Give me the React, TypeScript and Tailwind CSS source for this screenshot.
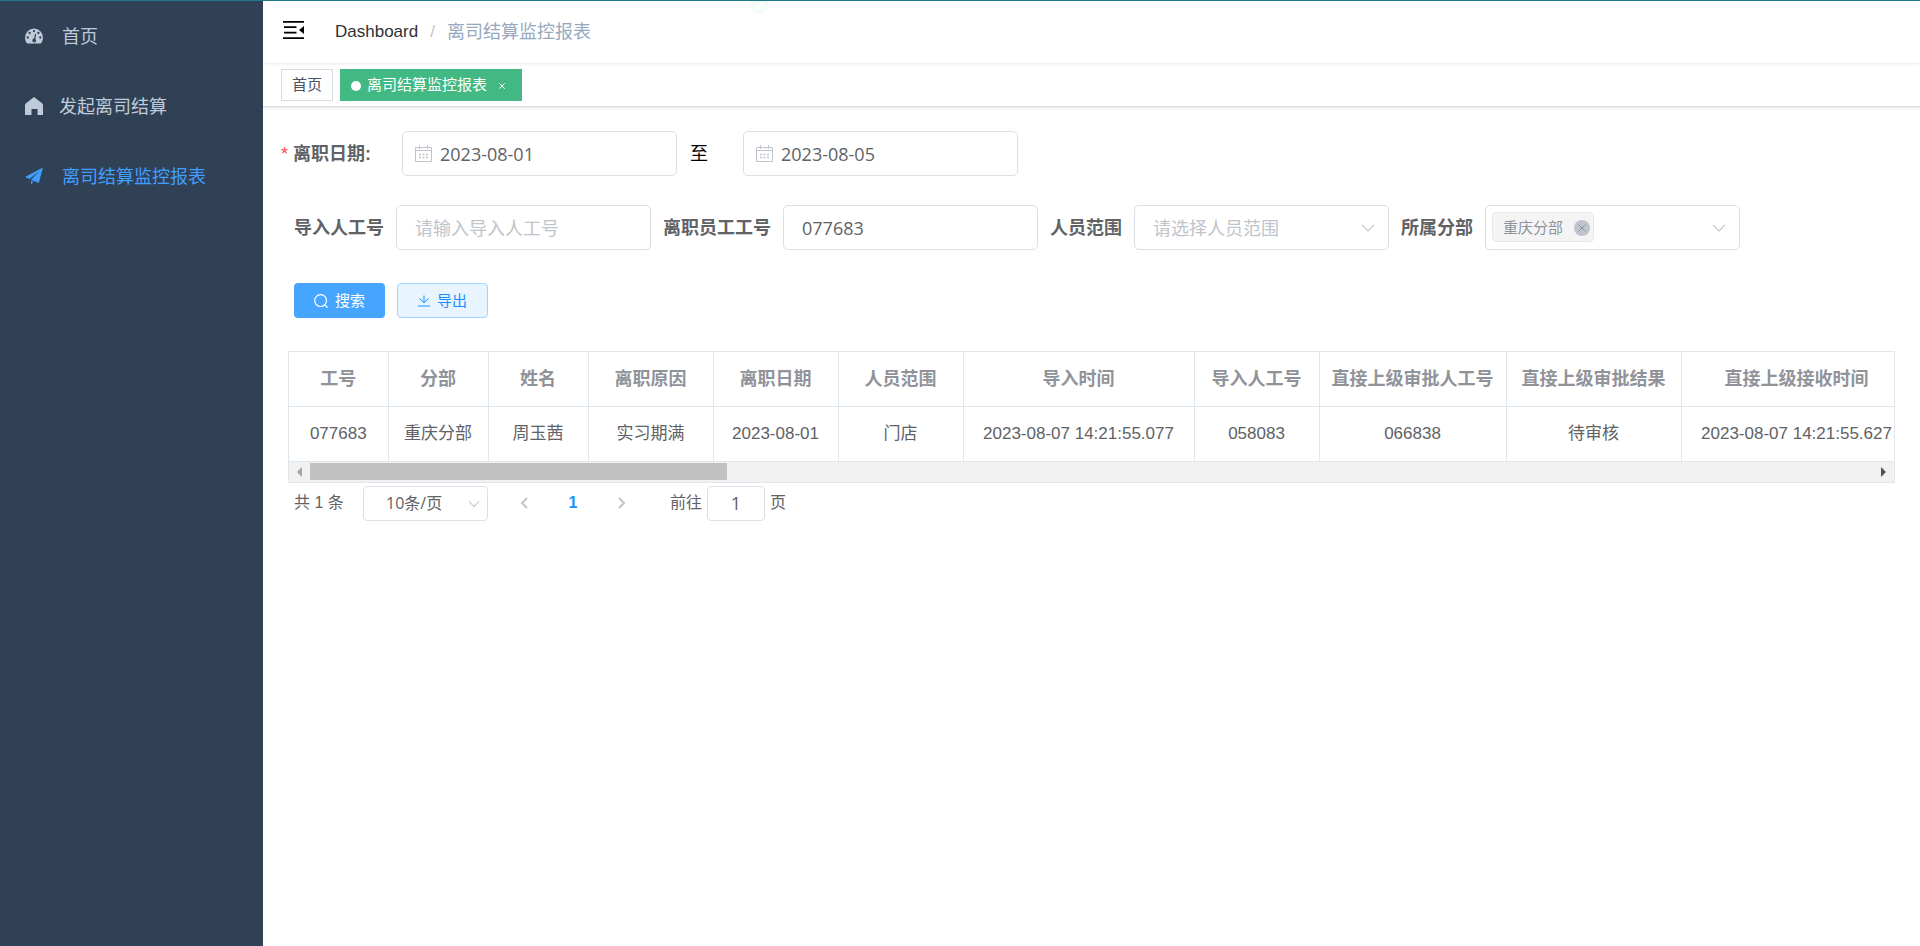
import React from 'react';

const menu = [
  { name: '首页', icon: 'dashboard', active: false },
  { name: '发起离司结算', icon: 'home', active: false },
  { name: '离司结算监控报表', icon: 'plane', active: true },
];

const columns = [
  { label: '工号', value: '077683', width: 'w-[99px]' },
  { label: '分部', value: '重庆分部', width: 'w-[100px]' },
  { label: '姓名', value: '周玉茜', width: 'w-[100px]' },
  { label: '离职原因', value: '实习期满', width: 'w-[125px]' },
  { label: '离职日期', value: '2023-08-01', width: 'w-[125px]' },
  { label: '人员范围', value: '门店', width: 'w-[125px]' },
  { label: '导入时间', value: '2023-08-07 14:21:55.077', width: 'w-[231px]' },
  { label: '导入人工号', value: '058083', width: 'w-[125px]' },
  { label: '直接上级审批人工号', value: '066838', width: 'w-[187px]' },
  { label: '直接上级审批结果', value: '待审核', width: 'w-[175px]' },
  { label: '直接上级接收时间', value: '2023-08-07 14:21:55.627', width: 'w-[231px]' },
];

const inputFont = "font-['Open_Sans','Noto_Sans_CJK_SC',sans-serif]";
const boxClass = `h-[45px] rounded-[5px] border border-[#dcdfe6] bg-white text-lg text-[#606266] placeholder:text-[#c0c4cc] outline-none ${inputFont}`;

const MenuIcon = ({ name }: { name: string }) => {
  if (name === 'dashboard') {
    return (
      <svg viewBox="0 0 18 16" className="w-[18px] h-4 flex-shrink-0" fill="currentColor">
        <path d="M9 .5a9 9 0 0 0-9 9c0 2 .5 3.800 1.500 5.200.3.500.7.800 1.300.800h12.400c.6 0 1-.3 1.300-.8A9.500 9.500 0 0 0 18 9.500a9 9 0 0 0-9-9z" />
        <g fill="#304156">
          <circle cx="2.700" cy="9.500" r="1.150" />
          <circle cx="4.600" cy="5" r="1.150" />
          <circle cx="9" cy="3.100" r="1.150" />
          <circle cx="13.400" cy="5" r="1.150" />
          <circle cx="15.300" cy="9.500" r="1.150" />
          <path d="M10.100 5.800l1 .3-.8 4.800a1.900 1.900 0 1 1-1.300-.3z" />
        </g>
      </svg>
    );
  }
  if (name === 'home') {
    return (
      <svg viewBox="0 0 18 18" className="w-[18px] h-[18px] flex-shrink-0" fill="currentColor">
        <path d="M9 0l8 6.300c.6.500 1 1.200 1 2V18h-5.500v-6h-6v6H0V8.300c0-.8.3-1.500 1-2z" />
      </svg>
    );
  }
  return (
    <svg viewBox="0 0 18 18" className="w-[18px] h-[18px] flex-shrink-0" fill="currentColor">
      <path d="M18 .5L0 10l4.400 2L14.500 4 6 12.700l7.800 3.300z" />
      <path d="M6 13.700v4.100l2.500-3z" />
    </svg>
  );
};

const CalendarIcon = () => (
  <svg viewBox="0 0 17 17" className="absolute left-[13px] top-3.5 w-[17px] h-[17px] text-[#c0c4cc] pointer-events-none" fill="none" stroke="currentColor">
    <path d="M.5 2.500h16v14H.5zM.5 5.500h16M4.500 0v4M12.500 0v4" />
    <path d="M4 9.500h9M4 12.500h9" strokeWidth="1.500" strokeDasharray="2 1.500" />
  </svg>
);

const Chevron = ({ className }: { className: string }) => (
  <svg viewBox="0 0 14 8" className={`absolute h-2 text-[#c0c4cc] pointer-events-none ${className}`} fill="none" stroke="currentColor" strokeWidth="1.200">
    <path d="M1 .8l6 6 6-6" />
  </svg>
);

const DateInput = ({ id, value }: { id: string; value: string }) => (
  <div className="relative">
    <CalendarIcon />
    <input id={id} defaultValue={value} className={`w-[275px] pl-[37px] pr-4 ${boxClass}`} />
  </div>
);

const Sidebar = () => (
  <aside className="w-[263px] flex-shrink-0 bg-[#304156]">
    <nav>
      {menu.map((item) => (
        <a
          key={item.name}
          href="#"
          className={`flex items-center h-[70px] pl-[25px] text-lg ${item.icon === 'home' ? 'gap-4' : 'gap-[19px]'} ${
            item.active ? 'text-[#409eff]' : 'text-[#bfcbd9]'
          }`}
        >
          <MenuIcon name={item.icon} />
          <span className="pt-0.5">{item.name}</span>
        </a>
      ))}
    </nav>
  </aside>
);

const Navbar = () => (
  <header className="relative flex items-center h-[62px] pl-5 shadow-[0_1px_4px_rgba(0,21,41,0.08)]">
    <button aria-label="折叠菜单" className="pb-1 text-black">
      <svg viewBox="0 0 21 18" className="block w-[21px] h-[18px]" fill="currentColor">
        <path d="M0 0h21v1.800H0zM1 5.200h12.500v1.800H1zM1 10.800h12.500v1.800H1zM0 16.200h21V18H0zM21 5v8l-5-4z" />
      </svg>
    </button>
    <nav className="flex items-center ml-[31px] leading-6">
      <a href="#" className="text-[17px] text-[#303133]">Dashboard</a>
      <span className="mx-3 text-[17px] text-[#c0c4cc]">/</span>
      <span className="text-lg leading-6 text-[#97a8be]">离司结算监控报表</span>
    </nav>
    {/* success message sliding out */}
    <svg viewBox="0 0 18 14" className="absolute left-[487px] top-0 w-[18px] h-3.5" fill="none">
      <path d="M0 0h18v4a9 9 0 0 1-18 0z" fill="#f3fcf7" />
      <path d="M5 4l3 3 5-5" stroke="#ffffff" strokeWidth="2" />
    </svg>
  </header>
);

const TagsView = () => (
  <div className="flex items-start gap-[7px] h-[43px] mt-px pl-[18px] pt-[5px] border-b border-[#d8dce5] shadow-[0_1px_3px_rgba(0,0,0,0.12)] text-[15px]">
    <a href="#" className="flex items-center h-8 px-2.5 pt-px border border-[#d8dce5] text-[#495060]">首页</a>
    <a href="#" className="flex items-center h-8 px-[11px] pt-px bg-[#42b983] text-white">
      <span className="w-2.5 h-2.5 mr-1.5 rounded-full bg-white" />
      离司结算监控报表
      <svg viewBox="0 0 6 6" className="w-1.5 h-1.5 ml-3 mr-1.5" stroke="currentColor">
        <path d="M.3.3l5.400 5.400M5.700.3L.3 5.700" />
      </svg>
    </a>
  </div>
);

const SearchForm = () => (
  <form onSubmit={(e) => e.preventDefault()}>
    <div className="flex items-center text-lg">
      <label htmlFor="startDate" className="w-[121px] font-bold text-[#606266]">
        <span className="mr-[5px] font-normal text-[#ff4949]">*</span>离职日期:
      </label>
      <DateInput id="startDate" value="2023-08-01" />
      <label htmlFor="endDate" className="w-[66px] pl-[13px] text-black">至</label>
      <DateInput id="endDate" value="2023-08-05" />
    </div>

    <div className="flex flex-wrap gap-x-3 gap-y-4 mt-[29px] pl-[13px] text-lg">
      <div className="flex items-center gap-3">
        <label htmlFor="importer" className="font-bold text-[#606266]">导入人工号</label>
        <input id="importer" placeholder="请输入导入人工号" className={`w-[255px] px-[18px] ${boxClass}`} />
      </div>
      <div className="flex items-center gap-3">
        <label htmlFor="employee" className="font-bold text-[#606266]">离职员工工号</label>
        <input id="employee" defaultValue="077683" className={`w-[255px] px-[18px] ${boxClass}`} />
      </div>
      <div className="flex items-center gap-3">
        <label htmlFor="range" className="font-bold text-[#606266]">人员范围</label>
        <div className="relative">
          <select id="range" className={`appearance-none w-[255px] px-[18px] ${boxClass} text-[#c0c4cc]!`}>
            <option>请选择人员范围</option>
          </select>
          <Chevron className="w-3.5 right-3.5 top-[19px]" />
        </div>
      </div>
      <div className="flex items-center gap-3">
        <label htmlFor="branch" className="font-bold text-[#606266]">所属分部</label>
        <div className="relative">
          <select id="branch" className={`appearance-none w-[255px] ${boxClass}`}>
            <option></option>
          </select>
          <span className="absolute left-[7px] top-[7px] flex items-center h-[30px] w-[102px] pl-2.5 pt-px rounded border border-[#e9e9eb] bg-[#f4f4f5] text-[15px] text-[#909399] whitespace-nowrap">
            重庆分部
            <button type="button" aria-label="移除" className="ml-[11px] flex items-center justify-center w-4 h-4 flex-shrink-0 rounded-full bg-[#c0c4cc]">
              <svg viewBox="0 0 8 8" className="w-2 h-2" stroke="#909399">
                <path d="M.5.5l7 7M7.500.5l-7 7" />
              </svg>
            </button>
          </span>
          <Chevron className="w-3.5 right-3.5 top-[19px]" />
        </div>
      </div>
    </div>

    <div className="flex gap-3 mt-[33px] pl-[13px] text-[15px]">
      <button className="flex items-center justify-center gap-[7px] w-[91px] h-[35px] pt-px rounded bg-[#46a6ff] text-white">
        <svg viewBox="0 0 14 14" className="w-3.5 h-3.5" fill="none" stroke="currentColor" strokeWidth="1.200">
          <circle cx="6.600" cy="6.600" r="5.900" />
          <path d="M10.800 10.800l2.700 2.700" />
        </svg>
        搜索
      </button>
      <button type="button" className="flex items-center justify-center gap-[7px] w-[91px] h-[35px] pt-px rounded border border-[#a3d3ff] bg-[#e8f4ff] text-[#1890ff]">
        <svg viewBox="0 0 12 12" className="w-3 h-3" fill="none" stroke="currentColor">
          <path d="M6 .5v7M1.500 3.500L6 7.700l4.500-4.200M0 11h12" />
        </svg>
        导出
      </button>
    </div>
  </form>
);

const ReportTable = () => (
  <div className="mt-[33px] ml-[7px] border border-[#dfe6ec] overflow-hidden">
    <div className="overflow-hidden">
      <table className="table-fixed w-[1623px] border-collapse">
        <thead>
          <tr className="h-[54px] border-b border-[#dfe6ec]">
            {columns.map((col) => (
              <th key={col.label} className={`${col.width} border-r border-[#dfe6ec] text-lg leading-6 font-bold text-[#909399] whitespace-nowrap`}>
                {col.label}
              </th>
            ))}
          </tr>
        </thead>
        <tbody>
          <tr className="h-[55px] border-b border-[#dfe6ec]">
            {columns.map((col) => (
              <td key={col.label} className="border-r border-[#dfe6ec] text-center text-[17px] leading-6 text-[#606266] whitespace-nowrap">
                {col.value}
              </td>
            ))}
          </tr>
        </tbody>
      </table>
    </div>
    <div className="flex items-center h-5 bg-[#f1f1f1]">
      <span className="flex justify-center w-[21px]">
        <svg viewBox="0 0 5 10" className="w-[5px] h-2.5" fill="#a3a3a3"><path d="M5 0v10L0 5z" /></svg>
      </span>
      <div className="flex-grow">
        <div className="w-4/15 h-[17px] bg-[#c1c1c1]" />
      </div>
      <span className="flex justify-center w-[21px]">
        <svg viewBox="0 0 5 10" className="w-[5px] h-2.5" fill="#505050"><path d="M0 0v10l5-5z" /></svg>
      </span>
    </div>
  </div>
);

const Pagination = () => (
  <div className="flex items-center mt-[3px] pl-[13px] text-base text-[#606266]">
    <span className="w-[69px]">共 1 条</span>
    <div className="relative">
      <select aria-label="每页条数" className={`appearance-none w-[125px] h-[35px] pl-[22px] rounded border border-[#dcdfe6] bg-white ${inputFont}`}>
        <option>10条/页</option>
      </select>
      <Chevron className="w-3 right-2 top-3.5" />
    </div>
    <div className="flex items-center justify-between w-[106px] ml-8">
      <button aria-label="上一页" className="text-[#c0c4cc]">
        <svg viewBox="0 0 8 12" className="w-2 h-3" fill="none" stroke="currentColor" strokeWidth="2"><path d="M7 1L2 6l5 5" /></svg>
      </button>
      <button className="font-bold text-[#1890ff]">1</button>
      <button aria-label="下一页" className="text-[#c0c4cc]">
        <svg viewBox="0 0 8 12" className="w-2 h-3" fill="none" stroke="currentColor" strokeWidth="2"><path d="M1 1l5 5-5 5" /></svg>
      </button>
    </div>
    <label htmlFor="jump" className="ml-11">前往</label>
    <input id="jump" defaultValue="1" className={`w-[58px] h-[35px] mx-[5px] rounded border border-[#dcdfe6] text-center text-lg outline-none ${inputFont}`} />
    <span>页</span>
  </div>
);

export default function App() {
  return (
    <div className="flex min-h-screen border-t border-[#1f7a8a] bg-white font-['Liberation_Sans','Noto_Sans_CJK_SC',sans-serif]">
      <Sidebar />
      <div className="flex-1 min-w-0">
        <Navbar />
        <TagsView />
        <main className="pt-6 pl-[18px] pr-[25px]">
          <SearchForm />
          <ReportTable />
          <Pagination />
        </main>
      </div>
    </div>
  );
}
